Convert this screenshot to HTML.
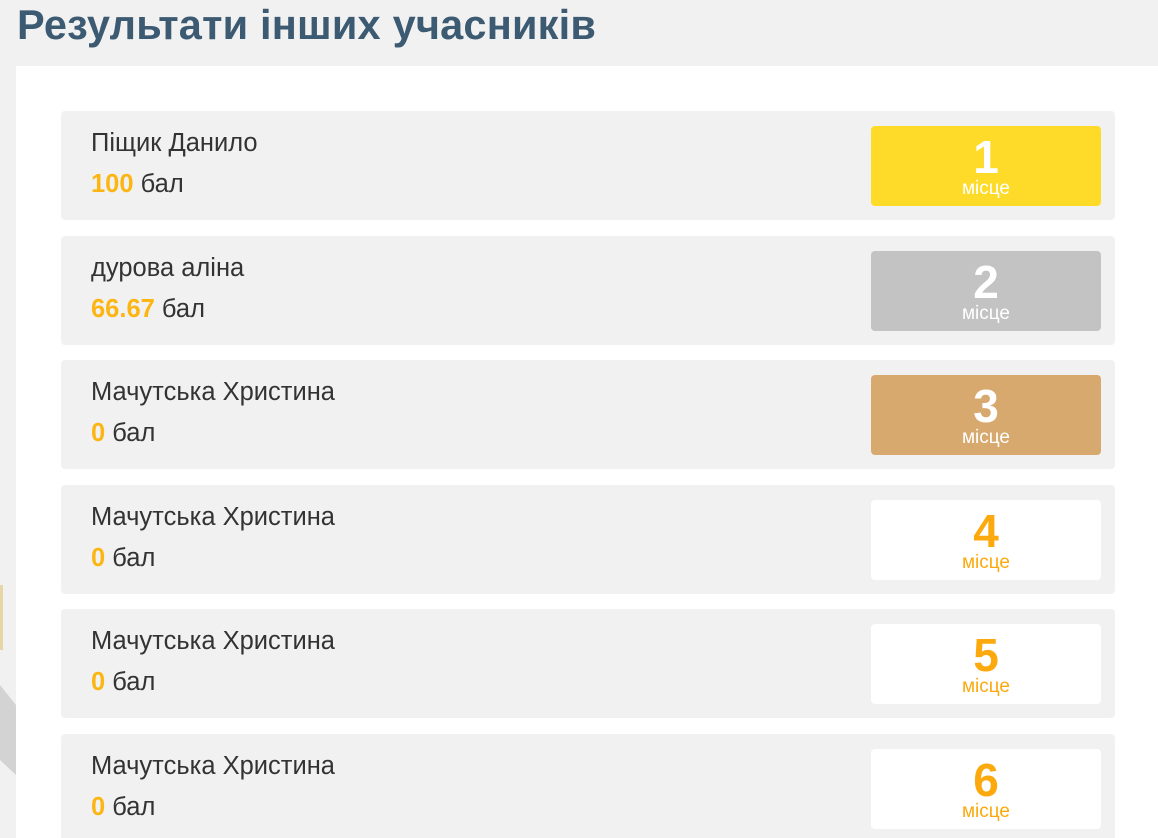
<!DOCTYPE html>
<html><head><meta charset="utf-8"><style>
html,body{margin:0;width:1158px;height:838px;overflow:hidden}
body{background:#f1f1f1;font-family:"Liberation Sans",Arial,sans-serif;position:relative}
h1{position:absolute;left:17px;top:1px;margin:0;font-size:41.5px;font-weight:bold;color:#3c5a71;letter-spacing:0.2px}
.panel{position:absolute;left:16px;top:66px;width:1142px;height:772px;background:#fff;overflow:hidden}
.card{position:absolute;left:45px;width:1054px;height:109px;background:#f1f1f1;border-radius:4px}
.name{position:absolute;left:30px;top:18px;font-size:25.5px;color:#333}
.score{position:absolute;left:30px;top:59px;font-size:25.5px;color:#333}
.score b{color:#fbb613}
.badge{position:absolute;left:810px;top:15px;width:230px;height:80px;border-radius:4px;text-align:center;color:#fff}
.badge .n{font-size:46px;font-weight:bold;line-height:46px;margin-top:8px}
.badge .m{font-size:19px;line-height:20px;margin-top:-1px}
.w{background:#fff;color:#fba90d}
</style></head><body>
<svg style="position:absolute;left:0;top:560px" width="16" height="278"><rect x="0" y="25" width="3" height="65" fill="#e6d6a8"/><polygon points="0,125 16,145 16,215 0,200" fill="#d3d3d3"/></svg>
<h1>Результати інших учасників</h1>
<div class="panel">
<div class="card" style="top:45px"><div class="name">Піщик Данило</div><div class="score"><b>100</b> бал</div><div class="badge" style="background:#fedb29"><div class="n">1</div><div class="m">місце</div></div></div>
<div class="card" style="top:170px"><div class="name">дурова аліна</div><div class="score"><b>66.67</b> бал</div><div class="badge" style="background:#c3c3c3"><div class="n">2</div><div class="m">місце</div></div></div>
<div class="card" style="top:294px"><div class="name">Мачутська Христина</div><div class="score"><b>0</b> бал</div><div class="badge" style="background:#d8a96e"><div class="n">3</div><div class="m">місце</div></div></div>
<div class="card" style="top:419px"><div class="name">Мачутська Христина</div><div class="score"><b>0</b> бал</div><div class="badge w"><div class="n">4</div><div class="m">місце</div></div></div>
<div class="card" style="top:543px"><div class="name">Мачутська Христина</div><div class="score"><b>0</b> бал</div><div class="badge w"><div class="n">5</div><div class="m">місце</div></div></div>
<div class="card" style="top:668px"><div class="name">Мачутська Христина</div><div class="score"><b>0</b> бал</div><div class="badge w"><div class="n">6</div><div class="m">місце</div></div></div>
</div>
</body></html>
